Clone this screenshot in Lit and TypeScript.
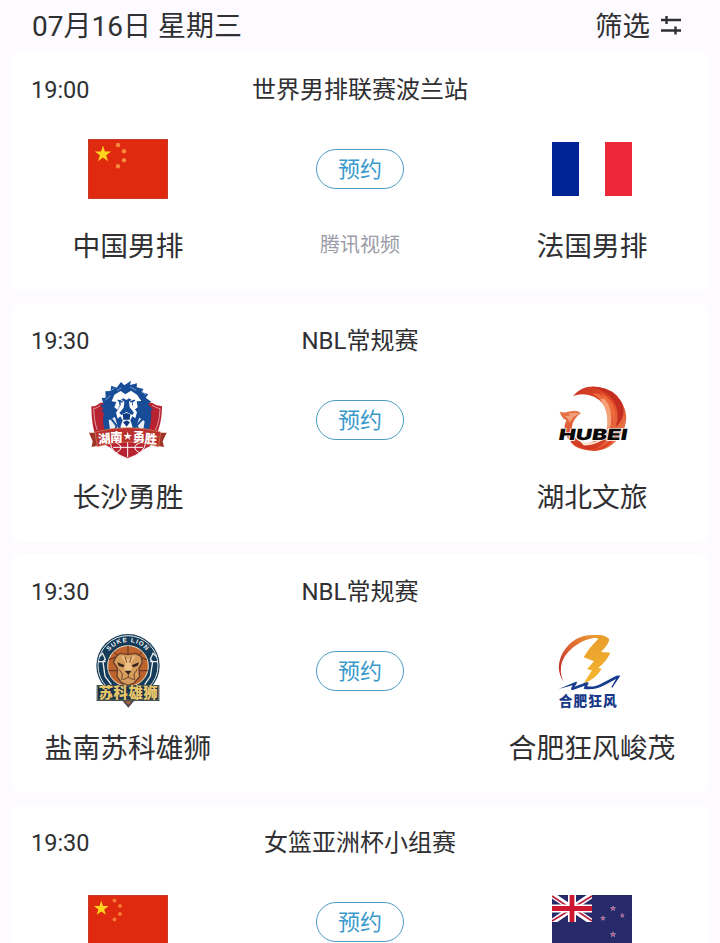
import { html, svg, css, LitElement } from "lit";
import { customElement, property } from "lit/decorators.js";

const STAR = "0,-10 2.25,-3.1 9.5,-3.1 3.65,1.2 5.9,8.1 0,3.8 -5.9,8.1 -3.65,1.2 -9.5,-3.1 -2.25,-3.1";

const star = (x: number, y: number, size: number, fill: string) => svg`
  <polygon points=${STAR} fill=${fill} transform="translate(${x} ${y}) scale(${size / 10})"/>`;

const logos: Record<string, unknown> = {
  china: html`
    <svg width="80" height="60" viewBox="0 0 80 60">
      <rect width="80" height="60" fill="#df2a10"/>
      <rect x=".5" y=".5" width="79" height="59" fill="none" stroke="#b5473a" stroke-opacity=".6"/>
      ${star(15, 15.2, 8.6, "#ffd51c")}
      <g fill="#f68a3c">
        <circle cx="30" cy="6" r="2.2"/><circle cx="36" cy="12.3" r="2.2"/>
        <circle cx="36" cy="21.3" r="2.2"/><circle cx="30" cy="27.3" r="2.2"/>
      </g>
    </svg>`,
  chinaWide: html`
    <svg width="80" height="54" viewBox="0 0 80 54">
      <rect width="80" height="54" fill="#df2a10"/>
      <rect x=".5" y=".5" width="79" height="53" fill="none" stroke="#b5473a" stroke-opacity=".6"/>
      ${star(13.3, 13.5, 7.8, "#ffd51c")}
      <g fill="#f47a35">
        <circle cx="26.5" cy="5.6" r="2"/><circle cx="32" cy="11" r="2"/>
        <circle cx="32" cy="19" r="2"/><circle cx="26.5" cy="24.4" r="2"/>
      </g>
    </svg>`,
  france: html`
    <svg width="80" height="54" viewBox="0 0 80 54">
      <rect width="80" height="54" fill="#fff"/>
      <rect width="27" height="54" fill="#002395"/>
      <rect x="53" width="27" height="54" fill="#ed2939"/>
    </svg>`,
  newZealand: html`
    <svg width="80" height="54" viewBox="0 0 80 54">
      <rect width="80" height="54" fill="#262a68"/>
      <svg width="40" height="27" viewBox="0 0 40 27">
        <path d="M0 0L40 27M40 0L0 27" stroke="#fff" stroke-width="6"/>
        <path d="M0 1L18 13M40 1L22 12M0 26L18 15M40 26L22 14" stroke="#b71d3b" stroke-width="1.6"/>
        <path d="M20 0V27M0 13.5H40" stroke="#fff" stroke-width="8"/>
        <path d="M20 0V27M0 13.5H40" stroke="#cf1630" stroke-width="4.8"/>
      </svg>
      ${[[61, 13.5, 3.2], [70.3, 20.5, 2.7], [51, 23.3, 3], [61, 39.5, 3.5]].map(([x, y, r]) => svg`
        ${star(x, y, r, "#d3b4d6")}${star(x, y, r * 0.55, "#b52e5c")}`)}
    </svg>`,
  changsha: html`
    <svg width="80" height="80" viewBox="24 30 240 240">
      <path d="M61 98Q47 110 34 109Q34 169 51 211L143 262L209 229Q246 180 246 109Q229 108 216 98Z" fill="#b72330"/>
      <path d="M61 106Q52 115 41 116Q43 158 52 180M216 106Q230 114 240 116Q239 155 226 180" fill="none" stroke="#f2d5d6" stroke-width="2"/>
      <path d="M75 118Q59 170 89 207H197Q220 155 211 112Z" fill="#174c97"/>
      <path d="M76 136L63 120L72 121L60 103L71 104L65 84L77 83L76 64L91 63L94 47L110 53L123 36L133 46L153 32L150 45L171 40L170 52L190 57L186 67L205 73L197 83L214 95L204 101L219 119L207 124L214 145L195 139L193 180L170 205H113L91 179L92 142Z" fill="#174c97"/>
      <path d="M103 74L122 63L136 73L153 62L171 74L184 93L170 94L173 112L163 119L158 106L160 93L147 85L139 90L130 85L116 94L119 107L112 119L103 112L109 96L95 94Z" fill="#fff"/>
      <path d="M122 88L133 95L131 113L118 129L124 135L139 126L157 135L162 128L149 112L147 95L158 87L156 105L171 127L166 145L157 139L151 151L158 172L139 182L121 172L128 151L121 139L113 146L108 128L122 106Z" fill="#fff"/>
      <path d="M113 91L128 96M151 96L165 91M132 114L139 121L148 114" fill="none" stroke="#174c97" stroke-width="5"/>
      <path d="M128 133L139 129L151 133L149 149H130ZM129 157L140 151L150 157L140 170Z" fill="#123c80"/>
      <path d="M92 62L103 55M76 91L91 77M184 63L198 75M111 62L124 53M151 51L169 61" stroke="#8fb1dc" stroke-width="2.5" fill="none"/>
      <path d="M86 151L105 141L116 180L105 199L91 186ZM165 180L178 143L194 154L189 185L175 199Z" fill="#e9eef7"/>
      <path d="M91 143L110 168L103 185M190 144L170 167L180 189" stroke="#174c97" stroke-width="6" fill="none"/>
      <path d="M91 218Q140 200 197 218Q196 248 143 266Q91 248 91 218Z" fill="#b72330" stroke="#fff" stroke-width="3"/>
      <path d="M143 211V262M99 232H189M106 217Q141 232 106 250M182 217Q145 232 182 250" stroke="#fff" stroke-width="3" fill="none"/>
      <path d="M27 188H52V227L35 231L38 214ZM260 188H230V227L252 231L248 214Z" fill="#9d3427"/>
      <path d="M45 186Q144 160 242 186L236 230Q144 202 52 230Z" fill="#b9302d" stroke="#d8895c" stroke-width="2"/>
      <g class="mark-text" fill="#fff" font-size="37">
        <text x="54" y="220" transform="rotate(-5 72 205)">湖</text>
        <text x="91" y="216">南</text>
        <text x="158" y="216">勇</text>
        <text x="195" y="220" transform="rotate(5 212 205)">胜</text>
      </g>
      ${star(143, 199, 14, "#fff")}
    </svg>`,
  hubei: html`
    <svg width="80" height="80" viewBox="24 30 240 240">
      <defs>
        <linearGradient id="flame" x1="0" y1="0" x2="1" y2="1">
          <stop offset="0" stop-color="#c93424"/>
          <stop offset=".5" stop-color="#df4b27"/>
          <stop offset="1" stop-color="#ee8a5c"/>
        </linearGradient>
        <linearGradient id="wing" x1="0" y1="0" x2="0" y2="1">
          <stop offset="0" stop-color="#e8794a"/>
          <stop offset="1" stop-color="#cf321e"/>
        </linearGradient>
      </defs>
      <path d="M87 78Q119 42 166 52Q211 58 231 94Q263 145 230 195Q200 244 143 242Q99 241 79 215Q130 231 165 205Q199 179 192 136Q184 96 150 80Q120 66 87 78Z" fill="url(#flame)"/>
      <path d="M142 50Q188 61 207 91Q231 126 215 171Q249 141 234 100Q208 50 142 50Z" fill="#c42e20"/>
      <path d="M168 66Q207 88 214 125L212 155Q197 106 146 70Q163 68 181 80Z" fill="#ed6a3b"/>
      <path d="M181 86Q207 112 201 165L186 190Q199 130 168 88Z" fill="#f5a17a"/>
      <path d="M47 125Q62 130 78 124Q98 118 111 129Q96 139 91 150Q77 170 90 196Q102 218 132 224Q171 219 201 190Q181 232 137 241Q92 232 71 204Q54 178 67 151Q52 143 47 125Z" fill="url(#wing)"/>
      <path d="M76 130L108 129L88 141L77 157L72 147L62 139L77 137Z" fill="#f2a17b"/>
      <path d="M110 215Q149 224 183 201Q159 228 118 226Z" fill="#fae0ce"/>
      <path d="M130 238Q176 241 217 193Q200 237 152 243Z" fill="#dc4325"/>
      <text class="mark-wide" transform="translate(42 211) skewX(-10)" font-size="46" textLength="206" lengthAdjust="spacingAndGlyphs" fill="#0b0808" stroke="#fff" stroke-width="4" paint-order="stroke">HUBEI</text>
    </svg>`,
  suke: html`
    <svg width="80" height="80" viewBox="24 27 240 240">
      <defs><path id="suke-arc" d="M73 131A71 71 0 0 1 215 131"/></defs>
      <circle cx="144" cy="131" r="95" fill="#153b59"/>
      <circle cx="144" cy="131" r="90" fill="none" stroke="#e6ebe9" stroke-width="3"/>
      <circle cx="144" cy="132" r="61" fill="#be632c" stroke="#efe4ce" stroke-width="3"/>
      <path d="M86 113Q144 85 201 113M144 71V99M101 90Q120 100 119 128M186 90Q169 100 170 130M85 146H205" stroke="#583027" stroke-width="3" fill="none"/>
      <path d="M58 104L68 94L76 112L69 119L75 163L94 188M230 104L219 94L211 112L218 119L211 163L194 188" stroke="#e8eeee" stroke-width="4" fill="none"/>
      <path d="M54 119H77M210 119H233" stroke="#e8eeee" stroke-width="4"/>
      <path d="M109 103L121 94L144 98L167 94L183 103L187 121L177 139L179 164L162 183L145 190L124 182L111 164L112 138L100 120Z" fill="#d69d5d" stroke="#653b2b" stroke-width="4"/>
      <path d="M123 101L136 123L133 146L145 151L156 146L153 123L166 101L151 106L144 113L137 106Z" fill="#efc083"/>
      <path d="M112 121L134 130L129 136L116 131ZM177 121L155 130L160 136L173 131ZM134 146H155L145 158Z" fill="#35231f"/>
      <path d="M145 157V166L129 173M145 166L161 173M117 142L127 156L125 174M172 142L162 156L164 174M135 104L140 122M154 104L149 122" stroke="#6e422c" stroke-width="3" fill="none"/>
      <text class="mark-latin" font-size="19" fill="#f2f4f4" letter-spacing="3"><textPath href="#suke-arc" startOffset="50%" text-anchor="middle">SUKE LION</textPath></text>
      <path d="M126 235H164L145 257Z" fill="#49414b"/>
      <path d="M134 238H156L145 249Z" fill="#a46342"/>
      <rect x="50" y="189" width="188" height="48" fill="#19344a"/>
      <rect x="53" y="192" width="182" height="42" fill="none" stroke="#a18a5a" stroke-width="2"/>
      <text class="mark-text" x="56" y="229" font-size="43" textLength="177" fill="#e9c56a">苏科雄狮</text>
    </svg>`,
  hefei: html`
    <svg width="80" height="80" viewBox="24 27 240 240">
      <defs>
        <linearGradient id="ring" x1="0" y1="1" x2="1" y2="0">
          <stop offset="0" stop-color="#b4232e"/>
          <stop offset=".45" stop-color="#db5d32"/>
          <stop offset="1" stop-color="#efb13a"/>
        </linearGradient>
        <linearGradient id="bolt" x1="0" y1="0" x2="0" y2="1">
          <stop offset="0" stop-color="#e99c2d"/>
          <stop offset="1" stop-color="#f5b62f"/>
        </linearGradient>
      </defs>
      <path d="M59 180Q31 139 57 91Q91 36 152 39Q181 40 195 51Q149 39 108 62Q69 84 55 117Q44 149 59 180Z" fill="url(#ring)"/>
      <path d="M139 43Q176 32 195 51Q199 61 171 90L199 92Q187 119 163 137L173 141Q154 172 119 184L144 145L129 142L150 118L119 106Q136 76 163 51Q151 44 139 43Z" fill="url(#bolt)"/>
      <path d="M44 201L94 180Q101 178 98 185L91 194L127 181Q136 179 133 186L129 192Q148 198 177 182L211 164Q219 160 229 161L205 197L202 195L216 171L184 188Q148 207 119 200L122 191L87 204Q79 205 82 197L86 190Z" fill="#173b8d"/>
      <text class="mark-text" x="44" y="253" font-size="41" textLength="174" fill="#173987">合肥狂风</text>
    </svg>`,
};

interface Team {
  name?: string;
  logo: string;
}

interface Match {
  time: string;
  title: string;
  home: Team;
  away: Team;
  channel?: string;
}

const matches: Match[] = [
  {
    time: "19:00",
    title: "世界男排联赛波兰站",
    home: { name: "中国男排", logo: "china" },
    away: { name: "法国男排", logo: "france" },
    channel: "腾讯视频",
  },
  {
    time: "19:30",
    title: "NBL常规赛",
    home: { name: "长沙勇胜", logo: "changsha" },
    away: { name: "湖北文旅", logo: "hubei" },
  },
  {
    time: "19:30",
    title: "NBL常规赛",
    home: { name: "盐南苏科雄狮", logo: "suke" },
    away: { name: "合肥狂风峻茂", logo: "hefei" },
  },
  {
    time: "19:30",
    title: "女篮亚洲杯小组赛",
    home: { logo: "chinaWide" },
    away: { logo: "newZealand" },
  },
];

@customElement("match-card")
export class MatchCard extends LitElement {
  static styles = css`
    :host {
      display: block;
      box-sizing: border-box;
      flex: none;
      height: 239px;
      border-radius: 8px;
      background: #fff;
    }
    .head {
      display: grid;
      grid-template-columns: 1fr 2fr 1fr;
      align-items: center;
      box-sizing: border-box;
      height: 77px;
      padding-bottom: 2px;
      font-size: 24px;
      line-height: 36px;
    }
    .time {
      padding-left: 19px;
      font-size: 23.5px;
    }
    .title {
      text-align: center;
    }
    .teams {
      display: grid;
      grid-template-columns: repeat(3, 1fr);
    }
    .side {
      display: flex;
      flex-direction: column;
      align-items: center;
    }
    .logo {
      display: flex;
      align-items: center;
      justify-content: center;
      width: 80px;
      height: 80px;
    }
    .logo svg {
      display: block;
    }
    .name {
      margin-top: 17px;
      font-size: 27.8px;
      line-height: 41px;
      white-space: nowrap;
    }
    .book {
      box-sizing: border-box;
      width: 88px;
      height: 40px;
      margin: 20px 0 41px;
      padding: 2px 0 0;
      border: 1px solid #4a9cc4;
      border-radius: 20px;
      background: #fff;
      color: #3a9acb;
      font-family: inherit;
      font-size: 22px;
      line-height: 36px;
    }
    .channel {
      font-size: 20px;
      line-height: 30px;
      color: #9c9ca8;
    }
    .mark-text {
      font-family: "Noto Sans CJK SC", sans-serif;
      font-weight: 900;
    }
    .mark-latin {
      font-family: "Liberation Sans", sans-serif;
      font-weight: 700;
    }
    .mark-wide {
      font-family: Inter, sans-serif;
      font-weight: 900;
    }
  `;

  @property({ attribute: false }) match!: Match;

  renderTeam(team: Team) {
    return html`
      <div class="side">
        <div class="logo">${logos[team.logo]}</div>
        ${team.name ? html`<div class="name">${team.name}</div>` : ""}
      </div>`;
  }

  render() {
    const { time, title, home, away, channel } = this.match;
    return html`
      <div class="head">
        <span class="time">${time}</span>
        <span class="title">${title}</span>
      </div>
      <div class="teams">
        ${this.renderTeam(home)}
        <div class="side">
          <button class="book">预约</button>
          ${channel ? html`<span class="channel">${channel}</span>` : ""}
        </div>
        ${this.renderTeam(away)}
      </div>`;
  }
}

@customElement("app-root")
export class AppRoot extends LitElement {
  static styles = css`
    :host {
      display: block;
      height: 943px;
      overflow: hidden;
      background: #fdfbff;
      color: #303033;
      font-family: Roboto, "Noto Sans CJK SC", sans-serif;
    }
    .bar {
      display: flex;
      align-items: center;
      justify-content: space-between;
      box-sizing: border-box;
      height: 52px;
      padding: 1px 38px 0 32px;
      font-size: 28px;
      line-height: 40px;
    }
    .filter {
      display: flex;
      align-items: center;
      gap: 11px;
      font-size: 27.5px;
    }
    .filter svg {
      margin-bottom: 3px;
    }
    .list {
      display: flex;
      flex-direction: column;
      gap: 12px;
      padding: 0 12px;
    }
  `;

  render() {
    return html`
      <div class="bar">
        <span>07月16日 星期三</span>
        <span class="filter">
          筛选
          <svg width="21" height="20" viewBox="0 0 21 20" fill="none" stroke="#303033" stroke-width="2.4">
            <path d="M0 5H20M5.5 1V9M0 15.5H20M14.5 11.5V19.5"/>
          </svg>
        </span>
      </div>
      <div class="list">
        ${matches.map((match) => html`<match-card .match=${match}></match-card>`)}
      </div>`;
  }
}
